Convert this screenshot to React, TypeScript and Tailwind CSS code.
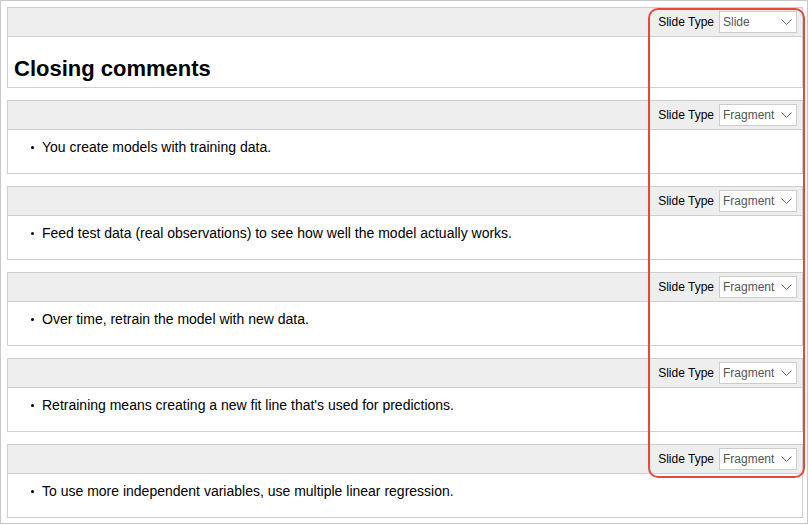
import React from "react";

const bullets = [
  "You create models with training data.",
  "Feed test data (real observations) to see how well the model actually works.",
  "Over time, retrain the model with new data.",
  "Retraining means creating a new fit line that's used for predictions.",
  "To use more independent variables, use multiple linear regression.",
];

function SlideSelect({ value }: { value: string }) {
  return (
    <div className="flex items-center gap-[5px]">
      <span className="text-[12px] text-black">Slide Type</span>
      <div className="w-[78px] h-[22px] bg-white border border-[#cccccc] flex items-center justify-between pl-[3px] pr-[4px]">
        <span className="text-[12px] text-[#555555]">{value}</span>
        <svg width="11" height="6" viewBox="0 0 11 6">
          <path d="M0.5 0.5 L5.5 5.5 L10.5 0.5" fill="none" stroke="#666666" strokeWidth="1" />
        </svg>
      </div>
    </div>
  );
}

function Header({ value }: { value: string }) {
  return (
    <div className="h-[29px] bg-[#eeeeee] border-b border-[#cfcfcf] flex items-center justify-end pr-[5px]">
      <SlideSelect value={value} />
    </div>
  );
}

export default function App() {
  return (
    <div className="relative w-[809px] h-[525px] bg-white" style={{ fontFamily: '"Liberation Sans", Arial, sans-serif' }}>
      <div className="w-[808px] h-[524px] border border-[#c8c8c8] pt-[6px] pl-[6px] flex flex-col gap-[12px]">
        <div className="w-[796px] border border-[#cfcfcf] bg-white">
          <Header value="Slide" />
          <div className="h-[50px] pl-[6px] pt-[19px]">
            <h1 className="text-[22px] font-bold leading-[26px] text-black">Closing comments</h1>
          </div>
        </div>
        {bullets.map((b) => (
          <div key={b} className="w-[796px] border border-[#cfcfcf] bg-white">
            <Header value="Fragment" />
            <div className="h-[43px] pl-[23px] pt-[9px] flex items-start">
              <div className="flex items-center h-[16px]">
                <span className="w-[3px] h-[3px] bg-black rounded-full mr-[8px]" />
                <span className="text-[14px] leading-[16px] text-black">{b}</span>
              </div>
            </div>
          </div>
        ))}
      </div>
      <div className="absolute left-[648px] top-[8px] w-[157px] h-[470px] border-2 border-[#e8483c] rounded-[10px] pointer-events-none" />
    </div>
  );
}
